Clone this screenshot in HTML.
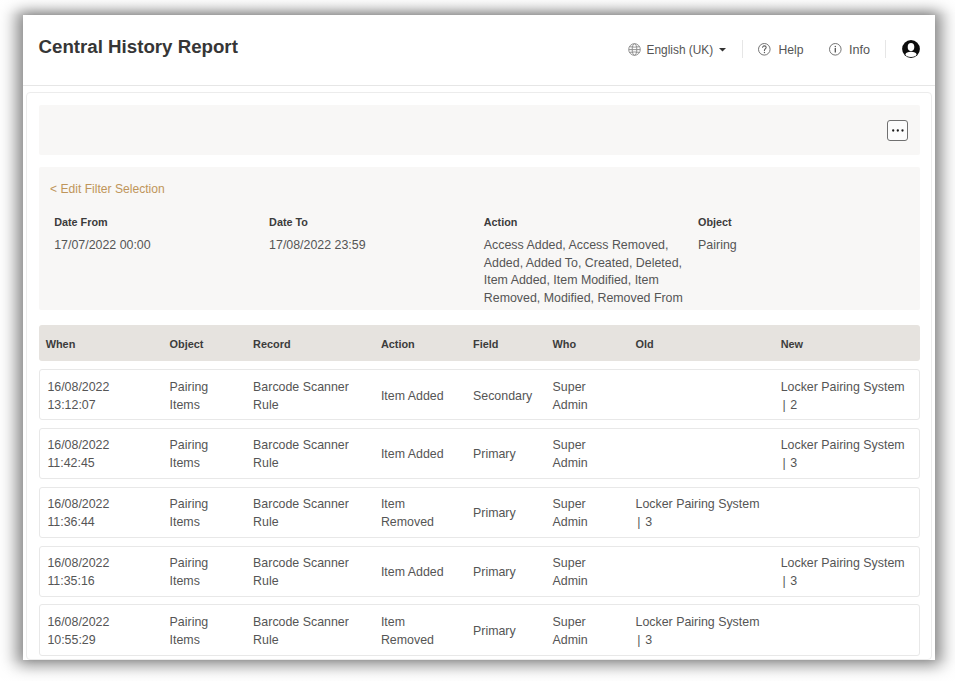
<!DOCTYPE html>
<html><head><meta charset="utf-8">
<style>
*{margin:0;padding:0;box-sizing:border-box}
html,body{width:955px;height:681px;overflow:hidden;background:#fff}
body{font-family:"Liberation Sans",sans-serif;color:#4d4d4d;position:relative}
.win{position:absolute;left:23px;top:15px;width:912px;height:645px;background:#fff;overflow:hidden}
.shd{position:absolute;left:23px;width:912px;background:#fff;box-shadow:0 0px 16px 6px rgba(0,0,0,.5)}
.ovt{position:absolute;left:0;top:0;width:955px;height:15px;background:linear-gradient(to bottom,rgba(255,255,255,.68),rgba(255,255,255,.45) 33%,rgba(255,255,255,.2) 67%,rgba(255,255,255,0))}
.ovb{position:absolute;left:0;top:660px;width:955px;height:21px;background:linear-gradient(to bottom,rgba(255,255,255,0),rgba(255,255,255,.14) 24%,rgba(255,255,255,.22) 48%,rgba(255,255,255,.5) 86%,rgba(255,255,255,.6))}
.t{position:absolute;white-space:nowrap}
.hdr{position:absolute;left:0;top:0;width:912px;height:71px;border-bottom:1px solid #e6e6e6}
.vline{position:absolute;width:1px;background:#e6e6e6}
.card{position:absolute;left:3px;top:77px;width:906px;height:568px;border:1px solid #ececec;border-radius:4px}
.panel{position:absolute;left:15.5px;width:881px;background:#f8f7f6;border-radius:2px}
.more{position:absolute;left:864px;top:105px;width:21px;height:21px;border:1px solid #707070;border-radius:3px;background:#fcfcfc}
.more i{position:absolute;top:8.5px;width:2.4px;height:2.4px;border-radius:50%;background:#222}
.thead{position:absolute;left:16px;top:310px;width:880.5px;height:36px;background:#e6e3df;border-radius:3px}
.row{position:absolute;left:16px;width:880.5px;height:51px;border:1px solid #e8e8e8;border-radius:3px;background:#fff}
</style></head><body>
<div class="shd" style="top:15px;height:645px"></div>
<div class="ovt"></div><div class="ovb"></div>
<div class="win">
<div class="hdr"></div>
<div class="card"></div>
<div class="panel" style="top:90px;height:49.5px"></div>
<div class="more" style="left:864.3px;top:105px"><svg style="position:absolute;left:-1px;top:-1px" width="21" height="21"><circle cx="6.2" cy="10.5" r="1.15" fill="#1a1a1a"/><circle cx="10.8" cy="10.5" r="1.15" fill="#1a1a1a"/><circle cx="15.5" cy="10.5" r="1.15" fill="#1a1a1a"/></svg></div>
<div class="panel" style="top:152px;height:143px"></div>
<div class="thead" style="left:16px;top:310px"></div>
<div class="row" style="top:354.00px;height:51px"></div>
<div class="row" style="top:413.00px;height:51px"></div>
<div class="row" style="top:472.00px;height:51px"></div>
<div class="row" style="top:531.00px;height:51px"></div>
<div class="row" style="top:589.00px;height:52px"></div>


<svg style="position:absolute;left:605px;top:27.5px" width="13" height="13" viewBox="0 0 13 13" fill="none" stroke="#8c8c8c" stroke-width="0.95">
<circle cx="6.5" cy="6.5" r="5.8"/><ellipse cx="6.5" cy="6.5" rx="2.3" ry="5.8"/><path d="M1.3 3.7Q6.5 4.6 11.7 3.7M0.8 6.6H12.2M1.3 9.4Q6.5 8.5 11.7 9.4"/>
</svg>
<svg style="position:absolute;left:695.8px;top:33.3px" width="7" height="4" viewBox="0 0 7 4"><path d="M0 0H7L3.5 3.6Z" fill="#333"/></svg>
<div class="vline" style="left:719px;top:25px;height:18px"></div>
<svg style="position:absolute;left:735.3px;top:28.4px" width="12.6" height="12.6" viewBox="0 0 12.6 12.6" fill="none" stroke="#6e6e6e" stroke-width="0.95">
<circle cx="6.3" cy="6.3" r="5.8"/><path d="M4.5 4.7C4.5 3.6 5.3 2.9 6.35 2.9S8.2 3.6 8.2 4.6C8.2 5.7 6.45 5.9 6.45 7.3V7.9" stroke="#5e5e5e" stroke-width="1.05"/><circle cx="6.45" cy="9.55" r="0.7" fill="#5e5e5e" stroke="none"/>
</svg>
<svg style="position:absolute;left:806.1px;top:28.4px" width="12.6" height="12.6" viewBox="0 0 12.6 12.6" fill="none" stroke="#6e6e6e" stroke-width="0.95">
<circle cx="6.3" cy="6.3" r="5.8"/><line x1="6.3" y1="5.1" x2="6.3" y2="9.4" stroke="#555" stroke-width="1.3"/><circle cx="6.3" cy="3.4" r="0.75" fill="#555" stroke="none"/>
</svg>
<div class="vline" style="left:862px;top:25px;height:18px"></div>
<svg style="position:absolute;left:878.5px;top:25.1px" width="18" height="18" viewBox="0 0 18 18">
<circle cx="9" cy="9" r="8.9" fill="#0c0c0c"/><ellipse cx="9" cy="7.1" rx="3.3" ry="4.1" fill="#fff"/><ellipse cx="9" cy="14.4" rx="5.5" ry="2.6" fill="#fff"/>
</svg>

<div class="t " style="left:15.50px;top:21.40px;font-size:18.7px;line-height:22px;font-weight:bold;color:#363636;">Central History Report</div>
<div class="t " style="left:623.50px;top:27.80px;font-size:11.9px;line-height:14px;color:#555;transform:scaleY(1.06);transform-origin:0 11.00px;">English (UK)</div>
<div class="t " style="left:755.40px;top:28.20px;font-size:12.2px;line-height:15px;color:#555;">Help</div>
<div class="t " style="left:825.90px;top:28.20px;font-size:12.6px;line-height:15px;color:#555;">Info</div>
<div class="t " style="left:27.10px;top:166.60px;font-size:12.1px;line-height:15px;color:#bf955a;transform:scaleY(1.08);transform-origin:0 11.50px;">&lt; Edit Filter Selection</div>
<div class="t " style="left:31.20px;top:200.80px;font-size:10.8px;line-height:13px;font-weight:bold;color:#3c3c3c;">Date From</div>
<div class="t " style="left:31.20px;top:223.40px;font-size:12.4px;line-height:15px;color:#555;transform:scaleY(1.08);transform-origin:0 11.50px;">17/07/2022 00:00</div>
<div class="t " style="left:246.10px;top:200.80px;font-size:10.8px;line-height:13px;font-weight:bold;color:#3c3c3c;">Date To</div>
<div class="t " style="left:246.10px;top:223.40px;font-size:12.4px;line-height:15px;color:#555;transform:scaleY(1.08);transform-origin:0 11.50px;">17/08/2022 23:59</div>
<div class="t " style="left:460.80px;top:200.80px;font-size:10.8px;line-height:13px;font-weight:bold;color:#3c3c3c;">Action</div>
<div class="t " style="left:460.80px;top:223.40px;font-size:12.4px;line-height:15px;color:#555;transform:scaleY(1.08);transform-origin:0 11.50px;">Access Added, Access Removed,</div>
<div class="t " style="left:460.80px;top:240.90px;font-size:12.4px;line-height:15px;color:#555;transform:scaleY(1.08);transform-origin:0 11.50px;">Added, Added To, Created, Deleted,</div>
<div class="t " style="left:460.80px;top:258.40px;font-size:12.4px;line-height:15px;color:#555;transform:scaleY(1.08);transform-origin:0 11.50px;">Item Added, Item Modified, Item</div>
<div class="t " style="left:460.80px;top:275.90px;font-size:12.4px;line-height:15px;color:#555;transform:scaleY(1.08);transform-origin:0 11.50px;">Removed, Modified, Removed From</div>
<div class="t " style="left:675.10px;top:200.80px;font-size:10.8px;line-height:13px;font-weight:bold;color:#3c3c3c;">Object</div>
<div class="t " style="left:675.10px;top:223.40px;font-size:12.4px;line-height:15px;color:#555;transform:scaleY(1.08);transform-origin:0 11.50px;">Pairing</div>
<div class="t " style="left:22.70px;top:322.60px;font-size:10.9px;line-height:13px;font-weight:bold;color:#3c3c3c;">When</div>
<div class="t " style="left:146.60px;top:322.60px;font-size:10.9px;line-height:13px;font-weight:bold;color:#3c3c3c;">Object</div>
<div class="t " style="left:230.10px;top:322.60px;font-size:10.9px;line-height:13px;font-weight:bold;color:#3c3c3c;">Record</div>
<div class="t " style="left:357.90px;top:322.60px;font-size:10.9px;line-height:13px;font-weight:bold;color:#3c3c3c;">Action</div>
<div class="t " style="left:450.00px;top:322.60px;font-size:10.9px;line-height:13px;font-weight:bold;color:#3c3c3c;">Field</div>
<div class="t " style="left:529.60px;top:322.60px;font-size:10.9px;line-height:13px;font-weight:bold;color:#3c3c3c;">Who</div>
<div class="t " style="left:612.50px;top:322.60px;font-size:10.9px;line-height:13px;font-weight:bold;color:#3c3c3c;">Old</div>
<div class="t " style="left:757.70px;top:322.60px;font-size:10.9px;line-height:13px;font-weight:bold;color:#3c3c3c;">New</div>
<div class="t " style="left:24.40px;top:364.70px;font-size:12.4px;line-height:15px;color:#555;transform:scaleY(1.08);transform-origin:0 11.50px;">16/08/2022</div>
<div class="t " style="left:24.40px;top:382.60px;font-size:12.4px;line-height:15px;color:#555;transform:scaleY(1.08);transform-origin:0 11.50px;">13:12:07</div>
<div class="t " style="left:146.60px;top:364.70px;font-size:12.4px;line-height:15px;color:#555;transform:scaleY(1.08);transform-origin:0 11.50px;">Pairing</div>
<div class="t " style="left:146.60px;top:382.60px;font-size:12.4px;line-height:15px;color:#555;transform:scaleY(1.08);transform-origin:0 11.50px;">Items</div>
<div class="t " style="left:230.10px;top:364.70px;font-size:12.4px;line-height:15px;color:#555;transform:scaleY(1.08);transform-origin:0 11.50px;">Barcode Scanner</div>
<div class="t " style="left:230.10px;top:382.60px;font-size:12.4px;line-height:15px;color:#555;transform:scaleY(1.08);transform-origin:0 11.50px;">Rule</div>
<div class="t " style="left:357.90px;top:373.50px;font-size:12.4px;line-height:15px;color:#555;transform:scaleY(1.08);transform-origin:0 11.50px;">Item Added</div>
<div class="t " style="left:450.00px;top:373.50px;font-size:12.4px;line-height:15px;color:#555;transform:scaleY(1.08);transform-origin:0 11.50px;">Secondary</div>
<div class="t " style="left:529.60px;top:364.70px;font-size:12.4px;line-height:15px;color:#555;transform:scaleY(1.08);transform-origin:0 11.50px;">Super</div>
<div class="t " style="left:529.60px;top:382.60px;font-size:12.4px;line-height:15px;color:#555;transform:scaleY(1.08);transform-origin:0 11.50px;">Admin</div>
<div class="t " style="left:757.70px;top:364.70px;font-size:12.4px;line-height:15px;color:#555;transform:scaleY(1.08);transform-origin:0 11.50px;">Locker Pairing System</div>
<div class="t " style="left:759.50px;top:382.60px;font-size:12.4px;line-height:15px;color:#555;transform:scaleY(1.08);transform-origin:0 11.50px;word-spacing:1.2px;">| 2</div>
<div class="t " style="left:24.40px;top:423.45px;font-size:12.4px;line-height:15px;color:#555;transform:scaleY(1.08);transform-origin:0 11.50px;">16/08/2022</div>
<div class="t " style="left:24.40px;top:441.35px;font-size:12.4px;line-height:15px;color:#555;transform:scaleY(1.08);transform-origin:0 11.50px;">11:42:45</div>
<div class="t " style="left:146.60px;top:423.45px;font-size:12.4px;line-height:15px;color:#555;transform:scaleY(1.08);transform-origin:0 11.50px;">Pairing</div>
<div class="t " style="left:146.60px;top:441.35px;font-size:12.4px;line-height:15px;color:#555;transform:scaleY(1.08);transform-origin:0 11.50px;">Items</div>
<div class="t " style="left:230.10px;top:423.45px;font-size:12.4px;line-height:15px;color:#555;transform:scaleY(1.08);transform-origin:0 11.50px;">Barcode Scanner</div>
<div class="t " style="left:230.10px;top:441.35px;font-size:12.4px;line-height:15px;color:#555;transform:scaleY(1.08);transform-origin:0 11.50px;">Rule</div>
<div class="t " style="left:357.90px;top:432.25px;font-size:12.4px;line-height:15px;color:#555;transform:scaleY(1.08);transform-origin:0 11.50px;">Item Added</div>
<div class="t " style="left:450.00px;top:432.25px;font-size:12.4px;line-height:15px;color:#555;transform:scaleY(1.08);transform-origin:0 11.50px;">Primary</div>
<div class="t " style="left:529.60px;top:423.45px;font-size:12.4px;line-height:15px;color:#555;transform:scaleY(1.08);transform-origin:0 11.50px;">Super</div>
<div class="t " style="left:529.60px;top:441.35px;font-size:12.4px;line-height:15px;color:#555;transform:scaleY(1.08);transform-origin:0 11.50px;">Admin</div>
<div class="t " style="left:757.70px;top:423.45px;font-size:12.4px;line-height:15px;color:#555;transform:scaleY(1.08);transform-origin:0 11.50px;">Locker Pairing System</div>
<div class="t " style="left:759.50px;top:441.35px;font-size:12.4px;line-height:15px;color:#555;transform:scaleY(1.08);transform-origin:0 11.50px;word-spacing:1.2px;">| 3</div>
<div class="t " style="left:24.40px;top:482.20px;font-size:12.4px;line-height:15px;color:#555;transform:scaleY(1.08);transform-origin:0 11.50px;">16/08/2022</div>
<div class="t " style="left:24.40px;top:500.10px;font-size:12.4px;line-height:15px;color:#555;transform:scaleY(1.08);transform-origin:0 11.50px;">11:36:44</div>
<div class="t " style="left:146.60px;top:482.20px;font-size:12.4px;line-height:15px;color:#555;transform:scaleY(1.08);transform-origin:0 11.50px;">Pairing</div>
<div class="t " style="left:146.60px;top:500.10px;font-size:12.4px;line-height:15px;color:#555;transform:scaleY(1.08);transform-origin:0 11.50px;">Items</div>
<div class="t " style="left:230.10px;top:482.20px;font-size:12.4px;line-height:15px;color:#555;transform:scaleY(1.08);transform-origin:0 11.50px;">Barcode Scanner</div>
<div class="t " style="left:230.10px;top:500.10px;font-size:12.4px;line-height:15px;color:#555;transform:scaleY(1.08);transform-origin:0 11.50px;">Rule</div>
<div class="t " style="left:357.90px;top:482.20px;font-size:12.4px;line-height:15px;color:#555;transform:scaleY(1.08);transform-origin:0 11.50px;">Item</div>
<div class="t " style="left:357.90px;top:500.10px;font-size:12.4px;line-height:15px;color:#555;transform:scaleY(1.08);transform-origin:0 11.50px;">Removed</div>
<div class="t " style="left:450.00px;top:491.00px;font-size:12.4px;line-height:15px;color:#555;transform:scaleY(1.08);transform-origin:0 11.50px;">Primary</div>
<div class="t " style="left:529.60px;top:482.20px;font-size:12.4px;line-height:15px;color:#555;transform:scaleY(1.08);transform-origin:0 11.50px;">Super</div>
<div class="t " style="left:529.60px;top:500.10px;font-size:12.4px;line-height:15px;color:#555;transform:scaleY(1.08);transform-origin:0 11.50px;">Admin</div>
<div class="t " style="left:612.50px;top:482.20px;font-size:12.4px;line-height:15px;color:#555;transform:scaleY(1.08);transform-origin:0 11.50px;">Locker Pairing System</div>
<div class="t " style="left:614.30px;top:500.10px;font-size:12.4px;line-height:15px;color:#555;transform:scaleY(1.08);transform-origin:0 11.50px;word-spacing:1.2px;">| 3</div>
<div class="t " style="left:24.40px;top:540.95px;font-size:12.4px;line-height:15px;color:#555;transform:scaleY(1.08);transform-origin:0 11.50px;">16/08/2022</div>
<div class="t " style="left:24.40px;top:558.85px;font-size:12.4px;line-height:15px;color:#555;transform:scaleY(1.08);transform-origin:0 11.50px;">11:35:16</div>
<div class="t " style="left:146.60px;top:540.95px;font-size:12.4px;line-height:15px;color:#555;transform:scaleY(1.08);transform-origin:0 11.50px;">Pairing</div>
<div class="t " style="left:146.60px;top:558.85px;font-size:12.4px;line-height:15px;color:#555;transform:scaleY(1.08);transform-origin:0 11.50px;">Items</div>
<div class="t " style="left:230.10px;top:540.95px;font-size:12.4px;line-height:15px;color:#555;transform:scaleY(1.08);transform-origin:0 11.50px;">Barcode Scanner</div>
<div class="t " style="left:230.10px;top:558.85px;font-size:12.4px;line-height:15px;color:#555;transform:scaleY(1.08);transform-origin:0 11.50px;">Rule</div>
<div class="t " style="left:357.90px;top:549.75px;font-size:12.4px;line-height:15px;color:#555;transform:scaleY(1.08);transform-origin:0 11.50px;">Item Added</div>
<div class="t " style="left:450.00px;top:549.75px;font-size:12.4px;line-height:15px;color:#555;transform:scaleY(1.08);transform-origin:0 11.50px;">Primary</div>
<div class="t " style="left:529.60px;top:540.95px;font-size:12.4px;line-height:15px;color:#555;transform:scaleY(1.08);transform-origin:0 11.50px;">Super</div>
<div class="t " style="left:529.60px;top:558.85px;font-size:12.4px;line-height:15px;color:#555;transform:scaleY(1.08);transform-origin:0 11.50px;">Admin</div>
<div class="t " style="left:757.70px;top:540.95px;font-size:12.4px;line-height:15px;color:#555;transform:scaleY(1.08);transform-origin:0 11.50px;">Locker Pairing System</div>
<div class="t " style="left:759.50px;top:558.85px;font-size:12.4px;line-height:15px;color:#555;transform:scaleY(1.08);transform-origin:0 11.50px;word-spacing:1.2px;">| 3</div>
<div class="t " style="left:24.40px;top:599.70px;font-size:12.4px;line-height:15px;color:#555;transform:scaleY(1.08);transform-origin:0 11.50px;">16/08/2022</div>
<div class="t " style="left:24.40px;top:617.60px;font-size:12.4px;line-height:15px;color:#555;transform:scaleY(1.08);transform-origin:0 11.50px;">10:55:29</div>
<div class="t " style="left:146.60px;top:599.70px;font-size:12.4px;line-height:15px;color:#555;transform:scaleY(1.08);transform-origin:0 11.50px;">Pairing</div>
<div class="t " style="left:146.60px;top:617.60px;font-size:12.4px;line-height:15px;color:#555;transform:scaleY(1.08);transform-origin:0 11.50px;">Items</div>
<div class="t " style="left:230.10px;top:599.70px;font-size:12.4px;line-height:15px;color:#555;transform:scaleY(1.08);transform-origin:0 11.50px;">Barcode Scanner</div>
<div class="t " style="left:230.10px;top:617.60px;font-size:12.4px;line-height:15px;color:#555;transform:scaleY(1.08);transform-origin:0 11.50px;">Rule</div>
<div class="t " style="left:357.90px;top:599.70px;font-size:12.4px;line-height:15px;color:#555;transform:scaleY(1.08);transform-origin:0 11.50px;">Item</div>
<div class="t " style="left:357.90px;top:617.60px;font-size:12.4px;line-height:15px;color:#555;transform:scaleY(1.08);transform-origin:0 11.50px;">Removed</div>
<div class="t " style="left:450.00px;top:608.50px;font-size:12.4px;line-height:15px;color:#555;transform:scaleY(1.08);transform-origin:0 11.50px;">Primary</div>
<div class="t " style="left:529.60px;top:599.70px;font-size:12.4px;line-height:15px;color:#555;transform:scaleY(1.08);transform-origin:0 11.50px;">Super</div>
<div class="t " style="left:529.60px;top:617.60px;font-size:12.4px;line-height:15px;color:#555;transform:scaleY(1.08);transform-origin:0 11.50px;">Admin</div>
<div class="t " style="left:612.50px;top:599.70px;font-size:12.4px;line-height:15px;color:#555;transform:scaleY(1.08);transform-origin:0 11.50px;">Locker Pairing System</div>
<div class="t " style="left:614.30px;top:617.60px;font-size:12.4px;line-height:15px;color:#555;transform:scaleY(1.08);transform-origin:0 11.50px;word-spacing:1.2px;">| 3</div>

</div>
</body></html>
